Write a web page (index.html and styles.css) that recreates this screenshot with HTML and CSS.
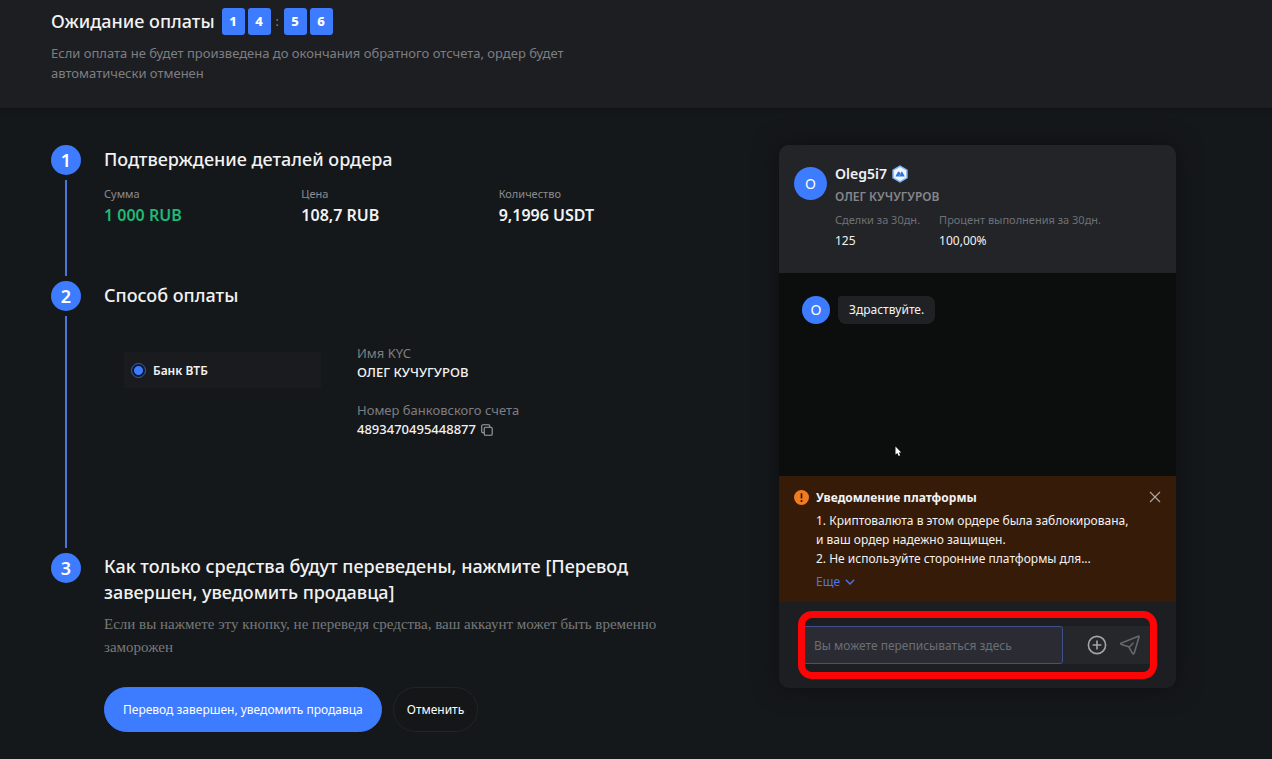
FILE: index.html
```html
<!DOCTYPE html>
<html lang="ru">
<head>
  <meta charset="UTF-8" />
  <meta name="viewport" content="width=device-width, initial-scale=1.0"/>
  <title>Ожидание оплаты</title>
  <link rel="stylesheet" href="styles.css">
</head>
<body>

<header class="page-header">
  <div class="title-row">
    <h1>Ожидание оплаты</h1>
    <div class="timer">
      <span class="digit">1</span>
      <span class="digit">4</span>
      <span class="colon">:</span>
      <span class="digit">5</span>
      <span class="digit">6</span>
    </div>
  </div>
  <p>Если оплата не будет произведена до окончания обратного отсчета, ордер будет автоматически отменен</p>
</header>

<main class="layout">
  <section class="steps">

    <div class="step">
      <div class="marker">
        <span class="num">1</span>
        <span class="line"></span>
      </div>
      <div class="step-body step-details">
        <h2>Подтверждение деталей ордера</h2>
        <dl class="details">
          <div><dt>Сумма</dt><dd class="green">1 000 RUB</dd></div>
          <div><dt>Цена</dt><dd>108,7 RUB</dd></div>
          <div><dt>Количество</dt><dd>9,1996 USDT</dd></div>
        </dl>
      </div>
    </div>

    <div class="step">
      <div class="marker">
        <span class="num">2</span>
        <span class="line"></span>
      </div>
      <div class="step-body step-payment">
        <h2>Способ оплаты</h2>
        <div class="payment">
          <label class="bank" for="bank-vtb">
            <input type="radio" id="bank-vtb" name="bank" checked>
            Банк ВТБ
          </label>
          <dl class="account">
            <div><dt>Имя KYC</dt><dd>ОЛЕГ КУЧУГУРОВ</dd></div>
            <div>
              <dt>Номер банковского счета</dt>
              <dd>4893470495448877
                <button class="icon-btn" aria-label="Скопировать">
                  <svg width="12" height="12" viewBox="0 0 12 12" fill="none" stroke="#a0a2a6" stroke-width="1.1">
                    <rect x="3.2" y="3.2" width="8" height="8" rx="1.3"/>
                    <path d="M3.2 8.8H2A1.3 1.3 0 0 1 .7 7.5V2A1.3 1.3 0 0 1 2 .7h5.5A1.3 1.3 0 0 1 8.8 2v1.2"/>
                  </svg>
                </button>
              </dd>
            </div>
          </dl>
        </div>
      </div>
    </div>

    <div class="step">
      <div class="marker">
        <span class="num">3</span>
      </div>
      <div class="step-body">
        <h2>Как только средства будут переведены, нажмите [Перевод завершен, уведомить продавца]</h2>
        <p class="warning">Если вы нажмете эту кнопку, не переведя средства, ваш аккаунт может быть временно заморожен</p>
        <div class="actions">
          <button class="btn btn-primary">Перевод завершен, уведомить продавца</button>
          <button class="btn btn-cancel">Отменить</button>
        </div>
      </div>
    </div>

  </section>

  <aside class="chat">
    <div class="chat-header">
      <span class="avatar">O</span>
      <div class="seller">
        <div class="nick">Oleg5i7
          <svg width="18" height="18" viewBox="0 0 18 18">
            <path d="M9 .3l7.7 4.4v8.6L9 17.7l-7.7-4.4V4.7z" fill="#7fb2f5"/>
            <path d="M9 1.9l6.2 3.5v7.2L9 16.1l-6.2-3.5V5.4z" fill="#eef6ff"/>
            <path d="M4.4 11.6L7 6.8h1.4l1 1.9 1-1.9h.8l2.6 4.8z" fill="#2f6fe0"/>
            <path d="M8.1 11.6l1.5-2.9" stroke="#9fc4fa" stroke-width=".6"/>
          </svg>
        </div>
        <div class="full-name">ОЛЕГ КУЧУГУРОВ</div>
        <dl class="stats">
          <div><dt>Сделки за 30дн.</dt><dd>125</dd></div>
          <div><dt>Процент выполнения за 30дн.</dt><dd>100,00%</dd></div>
        </dl>
      </div>
    </div>

    <div class="messages">
      <div class="message">
        <span class="avatar avatar-small">O</span>
        <p class="bubble">Здраствуйте.</p>
      </div>
      <svg class="cursor" width="7" height="11" viewBox="0 0 7 11">
        <path d="M.5.5v8l1.8-1.6 1.4 3 1.4-.7-1.3-2.8h2.4z" fill="#fff"/>
      </svg>
    </div>

    <div class="notice">
      <svg class="notice-icon" width="15" height="15" viewBox="0 0 15 15">
        <circle cx="7.5" cy="7.5" r="7.5" fill="#ee7c22"/>
        <path d="M7.5 3.2v5.2M7.5 10v1.9" stroke="#3a1b06" stroke-width="1.7"/>
      </svg>
      <div class="notice-text">
        <h3>Уведомление платформы</h3>
        <p>1. Криптовалюта в этом ордере была заблокирована,<br>и ваш ордер надежно защищен.</p>
        <p>2. Не используйте сторонние платформы для...</p>
        <a class="more" href="#">Еще
          <svg width="10" height="6" viewBox="0 0 10 6" fill="none" stroke="#4a78e8" stroke-width="1.4">
            <path d="M.8.8L5 4.9 9.2.8"/>
          </svg>
        </a>
      </div>
      <button class="icon-btn close-btn" aria-label="Закрыть">
        <svg width="12" height="12" viewBox="0 0 12 12" stroke="#b5a99f" stroke-width="1.1">
          <path d="M1 1l10 10M11 1L1 11"/>
        </svg>
      </button>
    </div>

    <form class="chat-form">
      <div class="input-row">
        <input type="text" placeholder="Вы можете переписываться здесь" aria-label="Сообщение">
        <button type="button" class="icon-btn" aria-label="Прикрепить">
          <svg width="20" height="20" viewBox="0 0 20 20" fill="none" stroke="#a3a5ab" stroke-width="1.6">
            <circle cx="10" cy="10" r="8.6"/>
            <path d="M10 5.6v8.8M5.6 10h8.8"/>
          </svg>
        </button>
        <button type="submit" class="icon-btn" aria-label="Отправить">
          <svg width="20" height="20" viewBox="0 0 20 20" fill="none" stroke="#66686e" stroke-width="1.6" stroke-linejoin="round" stroke-linecap="round">
            <path d="M1 8.2L18.3 1.2Q19.2 1 19 2L14.2 18.2Q13.5 19.6 12.5 18.3L9.2 12.6Q8.8 11.9 8 11.6L1.6 9.5Q.2 8.9 1 8.2zM9.2 12.2L13 8.2"/>
          </svg>
        </button>
      </div>
      <div class="highlight"></div>
    </form>
  </aside>
</main>

</body>
</html>
```
FILE: styles.css
```css
* { box-sizing: border-box; }
body {
  margin: 0;
  font-family: 'Noto Sans', 'Open Sans', sans-serif;
  font-size: 12px;
  background: #15181a;
  color: #f2f2f3;
}
h1, h2, h3, p, dl, dd { margin: 0; }
h1, h2 { font-weight: 500; }
button, input { font-family: inherit; font-size: inherit; }
button { cursor: pointer; }

/* Header */
.page-header {
  background: #1d1e21;
  padding: 7px 51px 25px;
  box-shadow: 0 1px 4px #101113;
}
.title-row { display: flex; align-items: center; gap: 7px; }
.title-row h1 { font-size: 18px; line-height: 28px; }
.timer { display: flex; align-items: center; gap: 3px; }
.digit {
  width: 23px;
  height: 27px;
  line-height: 27px;
  border-radius: 3px;
  background: #3d7bff;
  color: #fff;
  font-size: 13px;
  font-weight: 800;
  text-align: center;
}
.colon { width: 7px; text-align: center; color: #8b8c90; }
.page-header p {
  max-width: 520px;
  margin-top: 8px;
  font-size: 13px;
  line-height: 20px;
  color: #7d7e82;
}

/* Steps */
.layout {
  display: flex;
  justify-content: space-between;
  align-items: flex-start;
  padding: 37px 96px 26px 51px;
}
.steps { width: 645px; }
.step { display: flex; gap: 23px; }
.marker {
  display: flex;
  flex-direction: column;
  align-items: center;
  width: 30px;
}
.num {
  width: 30px;
  height: 30px;
  line-height: 30px;
  border-radius: 50%;
  background: #3d7bff;
  color: #fff;
  font-size: 18px;
  font-weight: 600;
  text-align: center;
}
.line {
  flex: 1;
  width: 2px;
  margin: 5px 0;
  background: #4a76dc;
}
.step-body { flex: 1; }
.step-details { min-height: 136px; }
.step-payment { min-height: 272px; }
.step h2 { max-width: 560px; font-size: 18px; line-height: 28px; }
.step:last-child h2 { line-height: 26px; }
.details {
  display: grid;
  grid-template-columns: repeat(3, 1fr);
  margin-top: 12px;
}
.details dt { font-size: 11px; line-height: 18px; color: #8a8b8f; }
.details dd { font-size: 16px; line-height: 24px; font-weight: 600; }
.details .green { color: #1fb877; }

.payment {
  display: flex;
  align-items: flex-start;
  gap: 36px;
  margin-top: 35px;
  padding-left: 20px;
}
.bank {
  display: flex;
  align-items: center;
  gap: 7px;
  width: 197px;
  height: 36px;
  margin-top: 8px;
  padding: 0 7px;
  background: #1a1b1e;
  font-weight: 600;
}
.bank input {
  appearance: none;
  width: 15px;
  height: 15px;
  margin: 0;
  border: 1px solid #3a5fb5;
  border-radius: 50%;
  background: radial-gradient(circle, #3d7bff 4px, #10182b 5px);
}
.account { font-size: 13px; line-height: 19px; }
.account div + div { margin-top: 19px; }
.account dt { color: #7d7e82; }
.account dd { display: flex; align-items: center; gap: 5px; font-weight: 500; }

.step .warning {
  max-width: 560px;
  margin-top: 8px;
  font-family: 'Liberation Serif', serif;
  font-size: 15px;
  line-height: 23px;
  color: #77787b;
}
.actions { display: flex; gap: 11px; margin-top: 28px; }
.btn {
  height: 45px;
  padding: 0 18px;
  border: 1px solid #3d7bff;
  border-radius: 23px;
  color: #fff;
}
.btn-primary { background: #3d7bff; }
.btn-cancel { background: #141618; border-color: #222427; padding: 0 13px; }
.icon-btn {
  display: flex;
  padding: 0;
  border: none;
  background: none;
}

/* Chat */
.chat {
  width: 397px;
  border-radius: 10px;
  background: #1d1e21;
  box-shadow: 0 0 24px #0e1011;
}
.chat-header {
  display: flex;
  gap: 8px;
  min-height: 128px;
  padding: 18px 15px;
  border-radius: 10px 10px 0 0;
  background: #222427;
}
.avatar {
  width: 33px;
  height: 33px;
  line-height: 33px;
  margin-top: 4px;
  border-radius: 50%;
  background: #3d7bff;
  color: #fff;
  font-size: 14px;
  text-align: center;
}
.avatar-small { width: 28px; height: 28px; line-height: 28px; margin: 0; }
.nick { display: flex; align-items: center; gap: 4px; font-size: 14px; line-height: 22px; font-weight: 600; }
.full-name { line-height: 24px; font-weight: 600; color: #85868b; }
.stats { display: flex; gap: 19px; }
.stats dt { font-size: 11px; line-height: 22px; color: #6f7176; }
.stats dd { line-height: 20px; }

.messages {
  position: relative;
  min-height: 203px;
  padding: 23px;
  background: #0c0e0e;
}
.message { display: flex; gap: 8px; }
.bubble {
  padding: 0 11px;
  line-height: 28px;
  border-radius: 3px 8px 8px 8px;
  background: #202124;
}
.cursor { position: absolute; left: 116px; top: 173px; }

.notice {
  display: flex;
  gap: 7px;
  padding: 12px 15px 11px;
  background: #361b09;
}
.notice-icon { flex: none; margin-top: 2px; }
.notice-text { flex: 1; line-height: 19px; }
.notice-text h3 { font-size: 12px; line-height: 20px; font-weight: 700; margin-bottom: 3px; }
.more {
  display: flex;
  align-items: center;
  gap: 5px;
  margin-top: 4px;
  color: #4a78e8;
  text-decoration: none;
}
.close-btn { align-self: flex-start; margin-top: 3px; }

.chat-form { position: relative; padding: 24px; }
.input-row {
  display: flex;
  align-items: center;
  gap: 13px;
  padding-right: 12px;
  background: #26272b;
}
.input-row input {
  flex: 1;
  min-width: 0;
  height: 38px;
  padding: 0 10px;
  border: 1px solid #40508c;
  border-radius: 3px;
  background: #2b2c33;
  color: #f2f2f3;
  outline: none;
}
.input-row input::placeholder { color: #6c6e75; }
.input-row input + .icon-btn { margin-left: 11px; }

/* red frame over the message box */
.highlight {
  position: absolute;
  inset: 9px 19px;
  border: 7px solid #fb0506;
  border-radius: 14px;
  pointer-events: none;
}
```
